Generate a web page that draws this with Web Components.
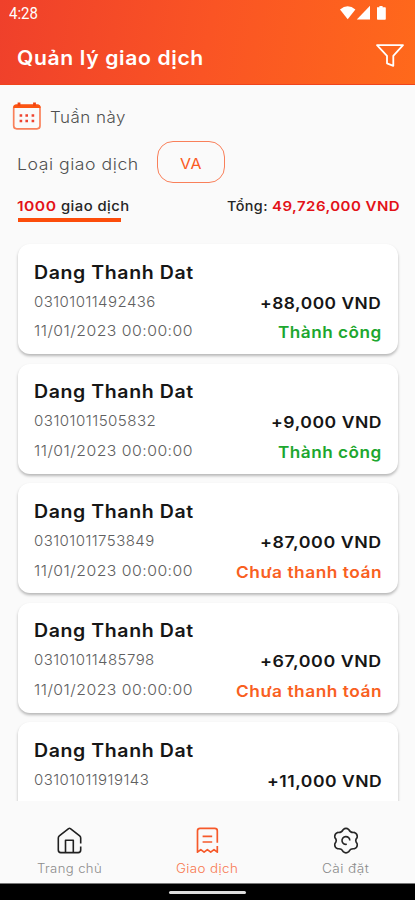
<!DOCTYPE html>
<html lang="vi">
<head>
<meta charset="utf-8">
<title>Quản lý giao dịch</title>
<style>
    html, body {
        margin: 0;
        height: 900px;
        overflow: hidden;
    }
</style>
</head>
<body>
<transaction-app></transaction-app>

<script>
// Single line of text stretched to a given width
class FitText extends HTMLElement {

    constructor() {
        super();

        this.attachShadow({mode: 'open'});
        this.shadowRoot.innerHTML = `
            <style>
                :host {
                    display: block;
                    flex: none;
                    white-space: nowrap;
                    letter-spacing: 0.03em;
                }
                span {
                    display: inline-block;
                    vertical-align: top;
                    transform-origin: 0 50%;
                }
            </style>
            <span><slot></slot></span>
        `;
    }

    connectedCallback() {
        const span = this.shadowRoot.querySelector('span');
        const width = parseFloat(this.getAttribute('width'));
        this.style.width = width + 'px';
        span.style.transform = `scaleX(${width / span.offsetWidth})`;
    }

}

class StatusBar extends HTMLElement {

    constructor() {
        super();

        this.attachShadow({mode: 'open'});
        this.shadowRoot.innerHTML = `
            <style>
                :host {
                    display: flex;
                    justify-content: space-between;
                    height: 28px;
                    padding: 0 27px 0 9px;
                    color: #fff;
                    font: 400 16px/28px Roboto, sans-serif;
                }
                fit-text { letter-spacing: 0; }
                svg { margin-top: 5px; }
            </style>
            <fit-text width="29">4:28</fit-text>
            <svg width="48" height="16" viewBox="0 0 48 16" fill="#fff">
                <path d="M0 4.4 Q7.7 -1.8 15.4 4.4 L7.7 14.2 Z"/>
                <path d="M30 0.8 V14.5 H16.8 Z"/>
                <path d="M37 2.3 H39.4 V1 H42.6 V2.3 H45 Q45.8 2.3 45.8 3.1 V14 Q45.8 14.8 45 14.8 H37.8 Q37 14.8 37 14 Z"/>
            </svg>
        `;
    }

}

class AppHeader extends HTMLElement {

    constructor() {
        super();

        this.attachShadow({mode: 'open'});
        this.shadowRoot.innerHTML = `
            <style>
                :host {
                    display: block;
                    box-sizing: border-box;
                    height: 85px;
                    background: linear-gradient(100deg, #ef402b 0%, #fa5424 50%, #ff691b 100%);
                    border-bottom: 1px solid #f0441c;
                }
                .bar {
                    display: flex;
                    justify-content: space-between;
                    padding: 0 11px 0 17px;
                    color: #fff;
                    font-size: 20px;
                    font-weight: 600;
                    line-height: 60px;
                }
                svg { margin-top: 15px; }
            </style>
            <status-bar></status-bar>
            <div class="bar">
                <fit-text width="187"><slot></slot></fit-text>
                <svg width="29" height="25" viewBox="0 0 29 25" fill="none" stroke="#fff" stroke-width="1.8" stroke-linejoin="round">
                    <path d="M2 2.2 H28 L18.3 12.8 V22.8 L12 20.3 V12.8 Z"/>
                </svg>
            </div>
        `;
    }

}

class FilterPanel extends HTMLElement {

    constructor() {
        super();

        this.attachShadow({mode: 'open'});
        this.shadowRoot.innerHTML = `
            <style>
                :host {
                    display: block;
                    height: 150px;
                    color: #505050;
                    font-size: 16.5px;
                    font-weight: 300;
                }
                div {
                    display: flex;
                }
                .period {
                    height: 56px;
                    padding-left: 12px;
                    gap: 8px;
                    line-height: 65px;
                }
                .period svg { margin-top: 17px; }
                .type {
                    height: 42px;
                    padding-left: 17px;
                    gap: 18px;
                    line-height: 46px;
                }
                .chip {
                    box-sizing: border-box;
                    width: 68px;
                    height: 42px;
                    justify-content: center;
                    border: 1px solid #f9805a;
                    border-radius: 16px;
                    color: #fb5a1f;
                    font-size: 14.5px;
                    font-weight: 400;
                    line-height: 43px;
                }
                .summary {
                    justify-content: space-between;
                    padding: 0 16px 0 17px;
                    color: #262626;
                    font-size: 13.3px;
                    font-weight: 500;
                    line-height: 46px;
                }
                .count, .total { gap: 4px; }
                .red { color: #e31218; font-weight: 600; }
                .line {
                    width: 103px;
                    height: 4px;
                    margin: -11px 0 0 18px;
                    background: #fc4c0a;
                }
            </style>
            <div class="period">
                <svg width="30" height="29" viewBox="0 0 30 29" fill="none">
                    <rect x="1.7" y="3.2" width="26.3" height="23.6" rx="3" stroke="#f9805a" stroke-width="1.7"/>
                    <path d="M1.3 6 V5.5 Q1.5 2.6 4.5 2.6 H25.5 Q28.4 2.6 28.6 5.5 V6 Z" fill="#fb5512"/>
                    <path d="M7 0.5 V4 M22.5 0.5 V4" stroke="#f24412" stroke-width="2.8"/>
                    <path d="M7.6 13.5 h2.6 M13.4 13.5 h2.6 M19.6 13.5 h2.6 M7.6 19 h2.6 M13.4 19 h2.6 M19.6 19 h2.6" stroke="#ef4430" stroke-width="2.3"/>
                </svg>
                <fit-text width="76">Tuần này</fit-text>
            </div>
            <div class="type">
                <fit-text width="122">Loại giao dịch</fit-text>
                <div class="chip"><fit-text width="22">VA</fit-text></div>
            </div>
            <div class="summary">
                <div class="count">
                    <fit-text class="red" width="40">1000</fit-text>
                    <fit-text width="69">giao dịch</fit-text>
                </div>
                <div class="total">
                    <fit-text width="41">Tổng:</fit-text>
                    <fit-text class="red" width="127.5">49,726,000 VND</fit-text>
                </div>
            </div>
            <div class="line"></div>
        `;
    }

}

class TransactionCard extends HTMLElement {

    constructor() {
        super();

        this.attachShadow({mode: 'open'});
    }

    connectedCallback() {
        const {name, account, accountWidth, amount, amountWidth, date, status} = this.data;
        this.shadowRoot.innerHTML = `
            <style>
                :host {
                    display: block;
                    flex: none;
                    box-sizing: border-box;
                    height: 110px;
                    padding: 0 16.5px 0 16px;
                    background: #fff;
                    border-radius: 12px;
                    box-shadow: 0 2px 3px rgba(0, 0, 0, 0.27);
                }
                .name {
                    padding-top: 13.5px;
                    color: #161616;
                    font-size: 18px;
                    font-weight: 600;
                    line-height: 30px;
                }
                .row {
                    display: flex;
                    justify-content: space-between;
                    height: 29.8px;
                    color: #606060;
                    font-size: 15px;
                    font-weight: 300;
                    line-height: 28px;
                }
                .right {
                    color: #161616;
                    font-size: 16px;
                    font-weight: 600;
                    line-height: 30px;
                }
                .done { color: #1da72f; }
                .pending { color: #f9601f; }
            </style>
            <fit-text class="name" width="159.5">${name}</fit-text>
            <div class="row">
                <fit-text width="${accountWidth}">${account}</fit-text>
                <fit-text class="right" width="${amountWidth}">${amount}</fit-text>
            </div>
            ${date ? `
                <div class="row">
                    <fit-text width="159">${date}</fit-text>
                    ${status === 'done'
                        ? '<fit-text class="right done" width="104">Thành công</fit-text>'
                        : '<fit-text class="right pending" width="146">Chưa thanh toán</fit-text>'}
                </div>
            ` : ''}
        `;
    }

}

const date = '11/01/2023 00:00:00';
const transactions = [
    {name: 'Dang Thanh Dat', account: '03101011492436', accountWidth: 122, amount: '+88,000 VND', amountWidth: 121.5, date, status: 'done'},
    {name: 'Dang Thanh Dat', account: '03101011505832', accountWidth: 122, amount: '+9,000 VND', amountWidth: 111, date, status: 'done'},
    {name: 'Dang Thanh Dat', account: '03101011753849', accountWidth: 121, amount: '+87,000 VND', amountWidth: 121.5, date, status: 'pending'},
    {name: 'Dang Thanh Dat', account: '03101011485798', accountWidth: 121, amount: '+67,000 VND', amountWidth: 121.5, date, status: 'pending'},
    {name: 'Dang Thanh Dat', account: '03101011919143', accountWidth: 115, amount: '+11,000 VND', amountWidth: 115},
];

class TransactionList extends HTMLElement {

    constructor() {
        super();

        this.attachShadow({mode: 'open'});
        this.shadowRoot.innerHTML = `
            <style>
                :host {
                    display: flex;
                    flex-direction: column;
                    gap: 9.6px;
                    box-sizing: border-box;
                    height: 567px;
                    padding: 9.3px 17px 0 18px;
                    overflow: hidden;
                }
            </style>
        `;
    }

    connectedCallback() {
        for (const data of transactions) {
            const card = document.createElement('transaction-card');
            card.data = data;
            this.shadowRoot.appendChild(card);
        }
    }

}

class NavItem extends HTMLElement {

    constructor() {
        super();

        this.attachShadow({mode: 'open'});
        this.shadowRoot.innerHTML = `
            <style>
                :host {
                    display: flex;
                    flex: 1;
                    flex-direction: column;
                    align-items: center;
                    color: #8c8c8c;
                    font-size: 12.5px;
                    font-weight: 300;
                    line-height: 24px;
                }
                :host([active]) { color: #f87850; }
                ::slotted(svg) { display: block; }
            </style>
            <slot name="icon"></slot>
            <fit-text width="${this.getAttribute('label-width')}"><slot></slot></fit-text>
        `;
    }

}

class NavBar extends HTMLElement {

    constructor() {
        super();

        this.attachShadow({mode: 'open'});
        this.shadowRoot.innerHTML = `
            <style>
                :host {
                    display: flex;
                    height: 56px;
                    padding-top: 26px;
                }
            </style>
            <nav-item label-width="65">
                <svg slot="icon" width="28" height="30" viewBox="0 0 28 30" fill="none" stroke="#202020" stroke-width="1.6" stroke-linejoin="round">
                    <path d="M25.7 16.5 V11 Q25.7 9.6 24.7 8.8 L15.4 1.6 Q14.5 1 13.6 1.6 L4.3 8.8 Q3.3 9.6 3.3 11 V23 Q3.3 25.6 5.8 25.6 H23.2 Q25.7 25.6 25.7 23 V19.5"/>
                    <path d="M10.5 25.6 V13.3 H18.3 V25.6"/>
                </svg>
                Trang chủ
            </nav-item>
            <nav-item active label-width="62">
                <svg slot="icon" width="28" height="30" viewBox="0 0 28 30" fill="none" stroke="#f6592a" stroke-width="1.7" stroke-linejoin="round">
                    <path d="M24.3 15.8 V3.8 Q24.3 1.3 21.8 1.3 H7 Q4.5 1.3 4.5 3.8 V25.2 L7.8 22.6 L11.1 25.2 L14.4 22.6 L17.7 25.2 L21 22.6 L24.3 25.2 V19"/>
                    <path d="M9.6 9.3 H19.2 M9.6 15 H19.2"/>
                </svg>
                Giao dịch
            </nav-item>
            <nav-item label-width="47">
                <svg slot="icon" width="28" height="30" viewBox="0 0 28 30" fill="none" stroke="#262626" stroke-width="1.6" stroke-linejoin="round">
                    <path d="M11.2 2.6 Q14 0.1 16.8 2.6 Q18.4 6 22.3 5.4 Q25.9 6.6 25.1 10.6 Q22.4 13.6 25.1 16.6 Q25.9 20.6 22.3 21.8 Q18.4 21.2 16.8 24.6 Q14 27.1 11.2 24.6 Q9.6 21.2 5.7 21.8 Q2.1 20.6 2.9 16.6 Q5.6 13.6 2.9 10.6 Q2.1 6.6 5.7 5.4 Q9.6 6 11.2 2.6 Z"/>
                    <path d="M14.8 17.3 A3.9 3.9 0 1 1 17.8 13.6"/>
                </svg>
                Cài đặt
            </nav-item>
        `;
    }

}

class GestureBar extends HTMLElement {

    constructor() {
        super();

        this.attachShadow({mode: 'open'});
        this.shadowRoot.innerHTML = `
            <style>
                :host {
                    display: flex;
                    box-sizing: border-box;
                    height: 17px;
                    padding-top: 7px;
                    justify-content: center;
                    background: #000;
                    border-top: 1px solid #777;
                }
                div {
                    width: 77px;
                    height: 3px;
                    border-radius: 2px;
                    background: #ddd;
                }
            </style>
            <div></div>
        `;
    }

}

class TransactionApp extends HTMLElement {

    constructor() {
        super();

        this.attachShadow({mode: 'open'});
        this.shadowRoot.innerHTML = `
            <style>
                :host {
                    display: flex;
                    flex-direction: column;
                    width: 415px;
                    height: 900px;
                    overflow: hidden;
                    background: #fafafa;
                    font-family: Inter, "Liberation Sans", sans-serif;
                }
            </style>
            <app-header>Quản lý giao dịch</app-header>
            <filter-panel></filter-panel>
            <transaction-list></transaction-list>
            <nav-bar></nav-bar>
            <gesture-bar></gesture-bar>
        `;
    }

}

customElements.define('fit-text', FitText);
customElements.define('status-bar', StatusBar);
customElements.define('app-header', AppHeader);
customElements.define('filter-panel', FilterPanel);
customElements.define('transaction-card', TransactionCard);
customElements.define('transaction-list', TransactionList);
customElements.define('nav-item', NavItem);
customElements.define('nav-bar', NavBar);
customElements.define('gesture-bar', GestureBar);
customElements.define('transaction-app', TransactionApp);
</script>
</body>
</html>
